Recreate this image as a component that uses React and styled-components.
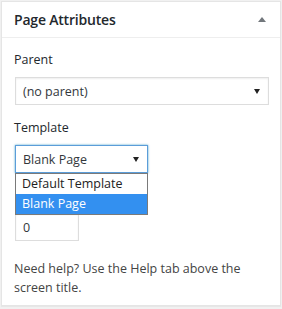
import React from "react";
import styled, { createGlobalStyle } from "styled-components";

const Global = createGlobalStyle`
  html, body { margin: 0; padding: 0; background: #f1f1f1; }
  body { padding: 1px 1px; font-family: "Open Sans", "Noto Sans", sans-serif; color: #444; }
  * { box-sizing: border-box; }
`;

const Panel = styled.div`
  width: 280px;
  height: 305px;
  background: #fff;
  border: 1px solid #e5e5e5;
  box-shadow: 0 1px 1px rgba(0,0,0,.04);
`;

const Header = styled.div`
  height: 36px;
  border-bottom: 1px solid #eee;
  display: flex;
  align-items: center;
  justify-content: space-between;
  padding: 0 14px 0 12px;
`;

const Title = styled.h2`
  margin: 0;
  font-size: 14px;
  font-weight: 600;
  color: #23282d;
  letter-spacing: -0.2px;
`;

const Toggle = styled.span`
  width: 0;
  height: 0;
  border-left: 4px solid transparent;
  border-right: 4px solid transparent;
  border-bottom: 5px solid #72777c;
  margin-top: -1px;
`;

const Inside = styled.div`
  padding: 13px 12px 12px;
  font-size: 12.5px;
`;

const Label = styled.p`
  margin: 0 0 ${p => p.$gap || 8}px;
  font-size: 12.5px;
  line-height: 18px;
  color: #23282d;
`;

const Field = styled.div`
  position: relative;
  margin-bottom: ${p => p.$mb || 13}px;
`;

const Select = styled.div`
  width: ${p => p.$w}px;
  height: 28px;
  margin-left: 1px;
  border: 1px solid ${p => (p.$focus ? "#5b9dd9" : "#ddd")};
  box-shadow: ${p => (p.$focus ? "0 0 2px rgba(30,140,190,.8)" : "inset 0 1px 2px rgba(0,0,0,.07)")};
  display: flex;
  align-items: center;
  justify-content: space-between;
  padding: 0 8px 0 7px;
  font-size: 12.5px;
  color: #32373c;
`;

const Arrow = styled.span`
  width: 0;
  height: 0;
  border-left: 3px solid transparent;
  border-right: 3px solid transparent;
  border-top: 5px solid #222;
`;

const List = styled.ul`
  position: absolute;
  left: 1px;
  top: 28px;
  width: 133px;
  margin: 0;
  padding: 0;
  list-style: none;
  background: #fff;
  border: 1px solid #7a7a7a;
  z-index: 2;
`;

const Option = styled.li`
  height: 20px;
  line-height: 20px;
  padding-left: 6px;
  font-size: 12.5px;
  color: ${p => (p.$active ? "#fff" : "#222")};
  background: ${p => (p.$active ? "#3390f0" : "#fff")};
`;

const NumberInput = styled.div`
  width: 64px;
  height: 28px;
  margin-left: 1px;
  border: 1px solid #ddd;
  box-shadow: inset 0 1px 2px rgba(0,0,0,.07);
  display: flex;
  align-items: center;
  padding-left: 7px;
  font-size: 12.5px;
  color: #32373c;
`;

const Help = styled.p`
  margin: 18px 0 0;
  font-size: 12.5px;
  line-height: 19px;
  color: #444;
`;

export default function App() {
  return (
    <>
      <Global />
      <Panel>
        <Header>
          <Title>Page Attributes</Title>
          <Toggle />
        </Header>
        <Inside>
          <Label>Parent</Label>
          <Field $mb={14}>
            <Select $w={254}>
              <span>(no parent)</span>
              <Arrow />
            </Select>
          </Field>
          <Label>Template</Label>
          <Field $mb={40}>
            <Select $w={133} $focus>
              <span>Blank Page</span>
              <Arrow />
            </Select>
            <List>
              <Option>Default Template</Option>
              <Option $active>Blank Page</Option>
            </List>
          </Field>
          <NumberInput>0</NumberInput>
          <Help>Need help? Use the Help tab above the screen title.</Help>
        </Inside>
      </Panel>
    </>
  );
}
